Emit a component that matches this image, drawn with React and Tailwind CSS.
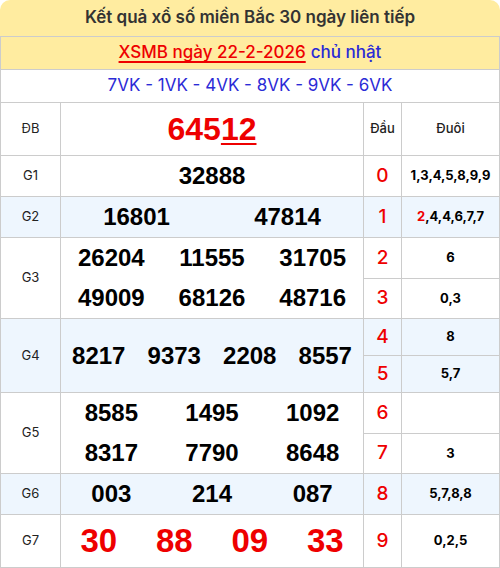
const RED = 'text-[#ee0000]';

function Num({ children, className = '' }) {
  return (
    <div className={`flex items-center justify-center font-['Liberation_Sans',Arial,sans-serif] font-bold text-[24px] text-black ${className}`}>
      {children}
    </div>
  );
}

function Label({ children, className = '' }) {
  return (
    <div className={`flex items-center justify-center text-[13px] text-[#222] ${className}`}>{children}</div>
  );
}

function Dau({ children, className = '' }) {
  return (
    <div className={`flex items-center justify-center text-[19px] font-medium ${RED} ${className}`}>{children}</div>
  );
}

function Duoi({ children, className = '' }) {
  return (
    <div className={`flex items-center justify-center text-[13px] font-bold text-black ${className}`}>{children}</div>
  );
}

export default function App() {
  return (
    <div className="w-[500px] h-[568px] bg-white font-['Inter','Noto_Sans',sans-serif]">
      {/* Title */}
      <div className="h-[36px] bg-[#ffeca0] rounded-t-[10px] flex items-center justify-center text-[17px] font-semibold text-[#333]">
        Kết quả xổ số miền Bắc 30 ngày liên tiếp
      </div>

      <div className="grid grid-cols-[59px_302px_37px_97px] grid-rows-[32px_32px_52px_40px_40px_40px_39px_36px_36px_40px_39px_40px_52px] gap-px bg-[#cccccc] border border-[#cccccc]">
        <div className="col-span-4 bg-[#ffeca0] flex items-center justify-center text-[17px] font-medium">
          <span className={`${RED} underline decoration-[1.5px] underline-offset-[3px]`}>XSMB ngày 22-2-2026</span>
          <span className="text-[#2b2bd6] ml-[5px]">chủ nhật</span>
        </div>
        <div className="col-span-4 bg-white flex items-center justify-center text-[17px] text-[#2b2bd6]">
          7VK - 1VK - 4VK - 8VK - 9VK - 6VK
        </div>

        {/* ĐB */}
        <Label className="bg-white">ĐB</Label>
        <Num className="bg-white text-[32px] !text-[#ee0000]">
          645<span className="underline decoration-[2px] underline-offset-[3px]">12</span>
        </Num>
        <div className="bg-white flex items-center justify-center text-[13px] font-medium text-[#222]">Đầu</div>
        <div className="bg-white flex items-center justify-center text-[13px] font-medium text-[#222]">Đuôi</div>

        {/* G1 */}
        <Label className="bg-white">G1</Label>
        <Num className="bg-white">32888</Num>
        <Dau className="bg-white">0</Dau>
        <Duoi className="bg-white">1,3,4,5,8,9,9</Duoi>

        {/* G2 */}
        <Label className="bg-[#eef6fe]">G2</Label>
        <div className="bg-[#eef6fe] grid grid-cols-2">
          <Num>16801</Num>
          <Num>47814</Num>
        </div>
        <Dau className="bg-[#eef6fe]">1</Dau>
        <Duoi className="bg-[#eef6fe]"><span className={RED}>2</span>,4,4,6,7,7</Duoi>

        {/* G3 */}
        <Label className="bg-white row-span-2">G3</Label>
        <div className="bg-white row-span-2 grid grid-cols-3 grid-rows-2">
          <Num>26204</Num>
          <Num>11555</Num>
          <Num>31705</Num>
          <Num>49009</Num>
          <Num>68126</Num>
          <Num>48716</Num>
        </div>
        <Dau className="bg-white">2</Dau>
        <Duoi className="bg-white">6</Duoi>
        <Dau className="bg-white">3</Dau>
        <Duoi className="bg-white">0,3</Duoi>

        {/* G4 */}
        <Label className="bg-[#eef6fe] row-span-2">G4</Label>
        <div className="bg-[#eef6fe] row-span-2 grid grid-cols-4">
          <Num>8217</Num>
          <Num>9373</Num>
          <Num>2208</Num>
          <Num>8557</Num>
        </div>
        <Dau className="bg-[#eef6fe]">4</Dau>
        <Duoi className="bg-[#eef6fe]">8</Duoi>
        <Dau className="bg-[#eef6fe]">5</Dau>
        <Duoi className="bg-[#eef6fe]">5,7</Duoi>

        {/* G5 */}
        <Label className="bg-white row-span-2">G5</Label>
        <div className="bg-white row-span-2 grid grid-cols-3 grid-rows-2">
          <Num>8585</Num>
          <Num>1495</Num>
          <Num>1092</Num>
          <Num>8317</Num>
          <Num>7790</Num>
          <Num>8648</Num>
        </div>
        <Dau className="bg-white">6</Dau>
        <Duoi className="bg-white"></Duoi>
        <Dau className="bg-white">7</Dau>
        <Duoi className="bg-white">3</Duoi>

        {/* G6 */}
        <Label className="bg-[#eef6fe]">G6</Label>
        <div className="bg-[#eef6fe] grid grid-cols-3">
          <Num>003</Num>
          <Num>214</Num>
          <Num>087</Num>
        </div>
        <Dau className="bg-[#eef6fe]">8</Dau>
        <Duoi className="bg-[#eef6fe]">5,7,8,8</Duoi>

        {/* G7 */}
        <Label className="bg-white">G7</Label>
        <div className="bg-white grid grid-cols-4">
          <Num className="text-[33px] !text-[#ee0000]">30</Num>
          <Num className="text-[33px] !text-[#ee0000]">88</Num>
          <Num className="text-[33px] !text-[#ee0000]">09</Num>
          <Num className="text-[33px] !text-[#ee0000]">33</Num>
        </div>
        <Dau className="bg-white">9</Dau>
        <Duoi className="bg-white">0,2,5</Duoi>
      </div>
    </div>
  );
}
